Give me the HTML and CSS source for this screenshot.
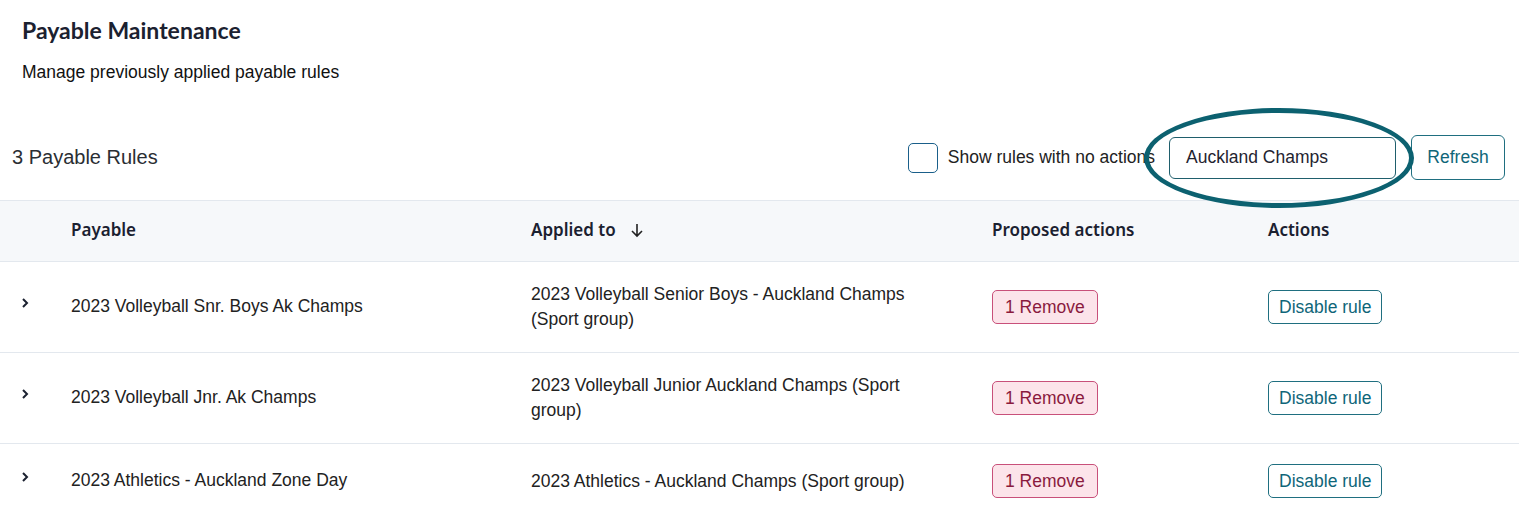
FILE: index.html
```html
<!DOCTYPE html>
<html lang="en">
<head>
<meta charset="utf-8">
<title>Payable Maintenance</title>
<link rel="stylesheet" href="styles.css">
</head>
<body>
<div class="page">
  <header class="page-header">
    <h1 class="title">Payable Maintenance</h1>
    <p class="subtitle">Manage previously applied payable rules</p>
  </header>

  <div class="toolbar">
    <div class="count">3 Payable Rules</div>
    <div class="controls">
      <label class="check">
        <span class="check-box"></span>
        <span class="check-label">Show rules with no actions</span>
      </label>
      <div class="search">Auckland Champs</div>
      <button class="btn btn-refresh">Refresh</button>
      <span class="annotation"></span>
    </div>
  </div>

  <div class="table">
    <div class="row head">
      <div class="cell"></div>
      <div class="cell">Payable</div>
      <div class="cell applied-head">Applied to
        <svg class="sort" width="14" height="16" viewBox="0 0 14 16"><path d="M7 2v12M2 9l5 5 5-5" fill="none" stroke="#222" stroke-width="1.6"/></svg>
      </div>
      <div class="cell">Proposed actions</div>
      <div class="cell">Actions</div>
    </div>

    <div class="row">
      <div class="cell chev-cell"><svg class="chev" width="10" height="14" viewBox="0 0 10 14"><path d="M3 3l4 4-4 4" fill="none" stroke="#1b2130" stroke-width="2"/></svg></div>
      <div class="cell single">2023 Volleyball Snr. Boys Ak Champs</div>
      <div class="cell applied">2023 Volleyball Senior Boys - Auckland Champs (Sport group)</div>
      <div class="cell"><span class="badge">1 Remove</span></div>
      <div class="cell"><button class="btn btn-small">Disable rule</button></div>
    </div>

    <div class="row">
      <div class="cell chev-cell"><svg class="chev" width="10" height="14" viewBox="0 0 10 14"><path d="M3 3l4 4-4 4" fill="none" stroke="#1b2130" stroke-width="2"/></svg></div>
      <div class="cell single">2023 Volleyball Jnr. Ak Champs</div>
      <div class="cell applied">2023 Volleyball Junior Auckland Champs (Sport group)</div>
      <div class="cell"><span class="badge">1 Remove</span></div>
      <div class="cell"><button class="btn btn-small">Disable rule</button></div>
    </div>

    <div class="row">
      <div class="cell chev-cell"><svg class="chev" width="10" height="14" viewBox="0 0 10 14"><path d="M3 3l4 4-4 4" fill="none" stroke="#1b2130" stroke-width="2"/></svg></div>
      <div class="cell single">2023 Athletics - Auckland Zone Day</div>
      <div class="cell applied">2023 Athletics - Auckland Champs (Sport group)</div>
      <div class="cell"><span class="badge">1 Remove</span></div>
      <div class="cell"><button class="btn btn-small">Disable rule</button></div>
    </div>
  </div>
</div>
</body>
</html>
```

FILE: styles.css
```css
* { box-sizing: border-box; }
html, body { margin: 0; background: #fff; }
body {
  font-family: "Liberation Sans", Arial, sans-serif;
  color: #1f2328;
  overflow: hidden;
}

.page-header { padding: 18px 22px 0; }
.title {
  margin: 0;
  font-family: Lato, "Noto Sans", sans-serif;
  font-weight: 700;
  font-size: 23px;
  line-height: 24px;
  color: #1b2130;
}
.subtitle {
  margin: 20px 0 0;
  font-size: 17.5px;
  line-height: 20px;
  color: #111;
}

.toolbar {
  margin-top: 53px;
  height: 45px;
  padding: 0 14px 0 12px;
  display: flex;
  align-items: center;
  justify-content: space-between;
}
.count { font-size: 20px; color: #2a2e33; }
.controls {
  position: relative;
  display: flex;
  align-items: center;
  height: 45px;
}
.check { display: flex; align-items: center; gap: 10px; }
.check-box {
  width: 30px; height: 30px;
  border: 1px solid #1a5f8a;
  border-radius: 5px;
  background: #fff;
}
.check-label { font-size: 17.5px; color: #222; }
.search {
  margin-left: 14px;
  width: 227px; height: 42px;
  border: 1px solid #1f5e6c;
  border-radius: 6px;
  padding: 0 16px;
  display: flex; align-items: center;
  font-size: 17.5px; color: #1f2430;
  background: #fff;
}
.btn {
  font-family: "Liberation Sans", Arial, sans-serif;
  background: #fff;
  color: #0f6679;
  border: 1px solid #1f6f80;
  cursor: pointer;
}
.btn-refresh {
  margin-left: 15px;
  width: 94px; height: 45px;
  border-radius: 6px;
  font-size: 17.5px;
}
.annotation {
  position: absolute;
  left: 236px; top: -27px;
  width: 270px; height: 100px;
  border: 5px solid #0c6170;
  border-radius: 50%;
  pointer-events: none;
}

.table { margin-top: 20px; border-top: 1px solid #e3e8ee; }
.row {
  display: grid;
  grid-template-columns: 59px 460px 461px 276px 1fr;
  border-bottom: 1px solid #e3e8ee;
  align-items: center;
  padding: 20px 0;
  font-size: 17.5px;
  line-height: 25px;
  color: #222;
}
.row.head {
  background: #f6f8fa;
  height: 61px;
  padding: 0 0 3px;
  font-family: "Noto Sans", sans-serif;
  font-weight: 600;
  font-size: 17px;
  color: #1b2130;
}
.cell { padding: 0 12px; }
.single { margin-top: -2px; }
.applied { padding-right: 60px; }
.applied-head { display: flex; align-items: center; gap: 14px; }
.sort { display: block; }
.chev-cell { padding-left: 20px; }
.chev { display: block; margin-top: -8px; }

.badge {
  display: inline-flex;
  align-items: center;
  height: 34px;
  padding: 0 12px;
  border: 1px solid #c8507a;
  border-radius: 5px;
  background: #fce4ea;
  color: #8a1a3e;
  font-size: 17.5px;
}
.btn-small {
  height: 34px;
  padding: 0 10px;
  border-radius: 5px;
  font-size: 17.5px;
}
```
